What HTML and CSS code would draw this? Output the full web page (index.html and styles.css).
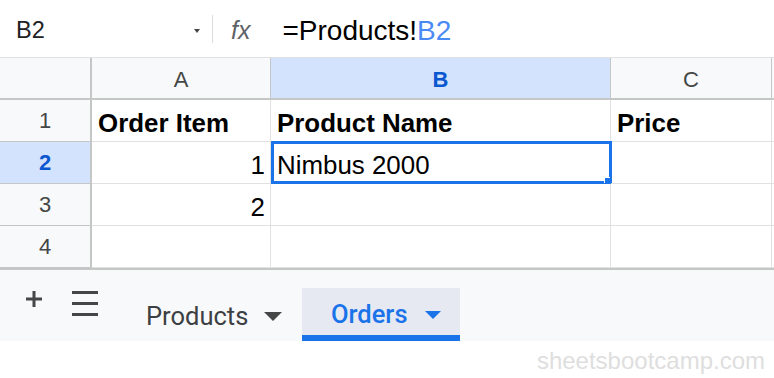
FILE: index.html
```html
<!DOCTYPE html>
<html>
<head>
<meta charset="utf-8">
<link rel="stylesheet" href="styles.css">
</head>
<body>
<div class="app">
  <div class="formula-bar">
    <div class="name-box">
      <span class="name-text">B2</span>
      <span class="name-arrow"></span>
    </div>
    <div class="sep"></div>
    <span class="fx">fx</span>
    <span class="formula">=Products!<span class="ref">B2</span></span>
  </div>

  <div class="sheet">
    <div class="corner"></div>
    <div class="colhead">A</div>
    <div class="colhead sel">B</div>
    <div class="colhead">C</div>
    <div class="colhead last"></div>

    <div class="rowhead">1</div>
    <div class="cell bold">Order Item</div>
    <div class="cell bold">Product Name</div>
    <div class="cell bold">Price</div>
    <div class="cell last"></div>

    <div class="rowhead sel">2</div>
    <div class="cell num">1</div>
    <div class="cell active">Nimbus 2000<span class="handle"></span></div>
    <div class="cell"></div>
    <div class="cell last"></div>

    <div class="rowhead">3</div>
    <div class="cell num">2</div>
    <div class="cell"></div>
    <div class="cell"></div>
    <div class="cell last"></div>

    <div class="rowhead">4</div>
    <div class="cell"></div>
    <div class="cell"></div>
    <div class="cell"></div>
    <div class="cell last"></div>
  </div>

  <div class="tabbar">
    <div class="tool plus">
      <svg width="18" height="18" viewBox="0 0 18 18"><path d="M9 1v16M1 9h16" stroke="#444746" stroke-width="3" fill="none"/></svg>
    </div>
    <div class="tool menu">
      <svg width="26" height="25" viewBox="0 0 26 25"><path d="M0 1.5h26M0 12.5h26M0 23.5h26" stroke="#444746" stroke-width="3" fill="none"/></svg>
    </div>
    <div class="tab first">
      <span>Products</span>
      <svg class="tri" width="18" height="9" viewBox="0 0 18 9"><path d="M0 0h18L9 9z" fill="#444746"/></svg>
    </div>
    <div class="tab active">
      <span>Orders</span>
      <svg class="tri" width="16" height="8" viewBox="0 0 16 8"><path d="M0 0h16L8 8z" fill="#1a73e8"/></svg>
    </div>
  </div>

  <div class="footer">
    <span class="watermark">sheetsbootcamp.com</span>
  </div>
</div>
</body>
</html>
```

FILE: styles.css
```css
* { box-sizing: border-box; }
html, body { margin: 0; padding: 0; background: #fff; }
body { font-family: "Liberation Sans", Arial, sans-serif; width: 774px; height: 378px; overflow: hidden; }

.app { display: flex; flex-direction: column; width: 774px; }

.formula-bar {
  height: 58px;
  display: flex;
  align-items: center;
  padding-top: 4px;
  border-bottom: 1px solid #e1e1e1;
  background: #fff;
}
.name-box {
  width: 212px;
  display: flex;
  align-items: center;
  justify-content: space-between;
  padding-left: 16px;
  padding-right: 12px;
}
.name-text { font-size: 23.5px; color: #202124; line-height: 1; }
.name-arrow {
  width: 0; height: 0;
  border-left: 3px solid transparent;
  border-right: 3px solid transparent;
  border-top: 4px solid #444746;
}
.sep { width: 1px; height: 28px; background: #dadce0; margin-top: -3px; }
.fx {
  margin-left: 18px;
  font-style: italic;
  font-size: 25px;
  color: #5f6368;
  line-height: 1;
}
.formula {
  margin-left: 32px;
  font-size: 28px;
  color: #000;
  line-height: 1;
}
.ref { color: #4a8af4; }

.sheet {
  display: grid;
  grid-template-columns: 92px 179px 340px 161px 2px;
  grid-template-rows: 42px 42px 42px 42px 42px;
}
.corner, .colhead, .rowhead {
  background: #f8f9fa;
  color: #444746;
  font-size: 22px;
  display: flex;
  align-items: center;
  justify-content: center;
}
.corner { border-right: 2px solid #c4c7c5; border-bottom: 2px solid #c4c7c5; }
.colhead { border-right: 1px solid #c4c7c5; border-bottom: 2px solid #c4c7c5; padding-top: 3px; }
.colhead.last { border-right: none; }
.rowhead { border-right: 2px solid #c4c7c5; border-bottom: 1px solid #c4c7c5; }
.colhead.sel, .rowhead.sel { background: #d3e3fd; color: #0b57d0; font-weight: bold; }

.cell {
  position: relative;
  border-right: 1px solid #e1e1e1;
  border-bottom: 1px solid #e1e1e1;
  font-size: 25.9px;
  line-height: 30px;
  color: #000;
  display: flex;
  align-items: flex-end;
  padding: 0 5px 3px 6px;
  white-space: nowrap;
}
.cell.last { border-right: none; }
.cell.bold { font-weight: bold; }
.cell.num { justify-content: flex-end; }
.cell.active::after {
  content: "";
  position: absolute;
  left: 0; right: -2px; top: -1px; bottom: -1px;
  border: 3px solid #1a73e8;
}
.handle {
  position: absolute;
  right: 0px; bottom: 0px;
  width: 6px; height: 6px;
  background: #1a73e8;
  border-left: 1px solid #fff;
  border-top: 1px solid #fff;
  z-index: 2;
}

.tabbar {
  height: 74px;
  margin-top: -1px;
  border-top: 3px solid #c4c7c5;
  background: #f8f9fa;
  display: flex;
  align-items: flex-end;
}
.tool { align-self: flex-start; display: flex; }
.plus { margin-left: 25px; margin-top: 20px; }
.menu { margin-left: 29px; margin-top: 21px; }
.tab {
  height: 53px;
  display: flex;
  align-items: center;
  font-family: Roboto, "Liberation Sans", sans-serif;
  font-size: 25.5px;
  color: #3c4043;
  padding-top: 2px;
}
.tab.first { margin-left: 48px; width: 156px; }
.tab .tri { margin-left: 16px; margin-top: 2px; }
.tab.active {
  width: 158px;
  padding-left: 29px;
  padding-top: 4px;
  background: #e6e9f2;
  border-bottom: 6px solid #1a73e8;
  color: #1a73e8;
  font-weight: 500;
}
.tab.active .tri { margin-left: 17px; }

.footer {
  height: 37px;
  display: flex;
  justify-content: flex-end;
  align-items: center;
  padding-right: 9px;
  padding-top: 2px;
}
.watermark {
  font-size: 24px;
  color: #dedede;
  line-height: 1;
}
```
